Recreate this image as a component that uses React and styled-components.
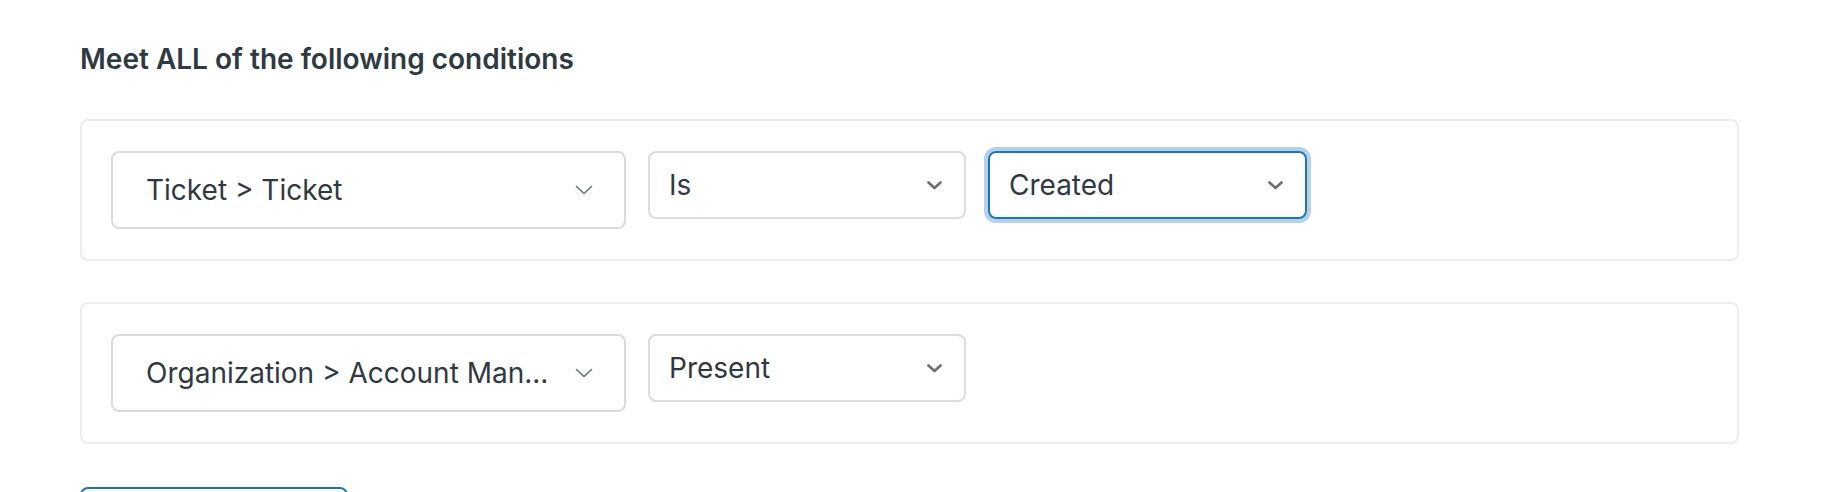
import styled, { createGlobalStyle } from "styled-components";

const GlobalStyle = createGlobalStyle`
  html, body {
    margin: 0;
    padding: 0;
    background: #ffffff;
    overflow: hidden;
  }
  body {
    font-family: Inter, "Noto Sans", "Liberation Sans", sans-serif;
    color: #2f3941;
  }
`;

const Page = styled.div`
  padding: 43px 105px 0 80px;
  display: flex;
  flex-direction: column;
`;

const Title = styled.h2`
  margin: 0 0 44px;
  font-size: 28px;
  line-height: 32px;
  font-weight: 600;
  color: #2f3941;
`;

const Conditions = styled.div`
  display: flex;
  flex-direction: column;
  gap: 41px;
`;

const Card = styled.div`
  border: 2px solid #ecedef;
  border-radius: 8px;
  padding: 30px 29px;
  display: flex;
  align-items: flex-start;
  gap: 22px;
`;

const Field = styled.div`
  box-sizing: border-box;
  width: ${(p) => p.$width}px;
  height: ${(p) => (p.$tall ? 78 : 68)}px;
  border: 2px solid ${(p) => (p.$focused ? "#1f73b7" : p.$tall ? "#d8dcde" : "#dcdcdc")};
  border-radius: 8px;
  box-shadow: ${(p) => (p.$focused ? "0 0 0 4px rgba(31, 115, 183, 0.33)" : "none")};
  display: flex;
  align-items: center;
  justify-content: space-between;
  padding: ${(p) => (p.$tall ? "0 31px 0 33px" : "0 22px 0 19px")};
  font-size: 28px;
  color: #2f3941;
  white-space: nowrap;
`;

const Label = styled.span`
  overflow: hidden;
  text-overflow: ellipsis;
`;

const AddButton = styled.button`
  margin-top: 43px;
  width: 268px;
  height: 64px;
  border: 2px solid #1f73b7;
  border-radius: 8px;
  background: #fff;
  padding: 0;
`;

const ThinChevron = () => (
  <svg width="18" height="10" viewBox="0 0 18 10">
    <polyline
      points="1.5,1.5 9,8.5 16.5,1.5"
      fill="none"
      stroke="#68737d"
      strokeWidth="1.6"
      strokeLinecap="round"
      strokeLinejoin="round"
    />
  </svg>
);

const NativeChevron = () => (
  <svg width="15" height="9" viewBox="0 0 15 9">
    <polyline
      points="1.5,1.5 7.5,7 13.5,1.5"
      fill="none"
      stroke="#6f6f6f"
      strokeWidth="2.6"
      strokeLinecap="round"
      strokeLinejoin="round"
    />
  </svg>
);

const Select = ({ label, width, tall, focused }) => (
  <Field $width={width} $tall={tall} $focused={focused}>
    <Label>{label}</Label>
    {tall ? <ThinChevron /> : <NativeChevron />}
  </Field>
);

const rows = [
  [
    { label: "Ticket > Ticket", width: 515, tall: true },
    { label: "Is", width: 318 },
    { label: "Created", width: 319, focused: true },
  ],
  [
    { label: "Organization > Account Man...", width: 515, tall: true },
    { label: "Present", width: 318 },
  ],
];

export default function App() {
  return (
    <>
      <GlobalStyle />
      <Page>
        <Title>Meet ALL of the following conditions</Title>
        <Conditions>
          {rows.map((row, i) => (
            <Card key={i}>
              {row.map((s) => (
                <Select key={s.label} {...s} />
              ))}
            </Card>
          ))}
        </Conditions>
        <AddButton aria-label="Add condition" />
      </Page>
    </>
  );
}
